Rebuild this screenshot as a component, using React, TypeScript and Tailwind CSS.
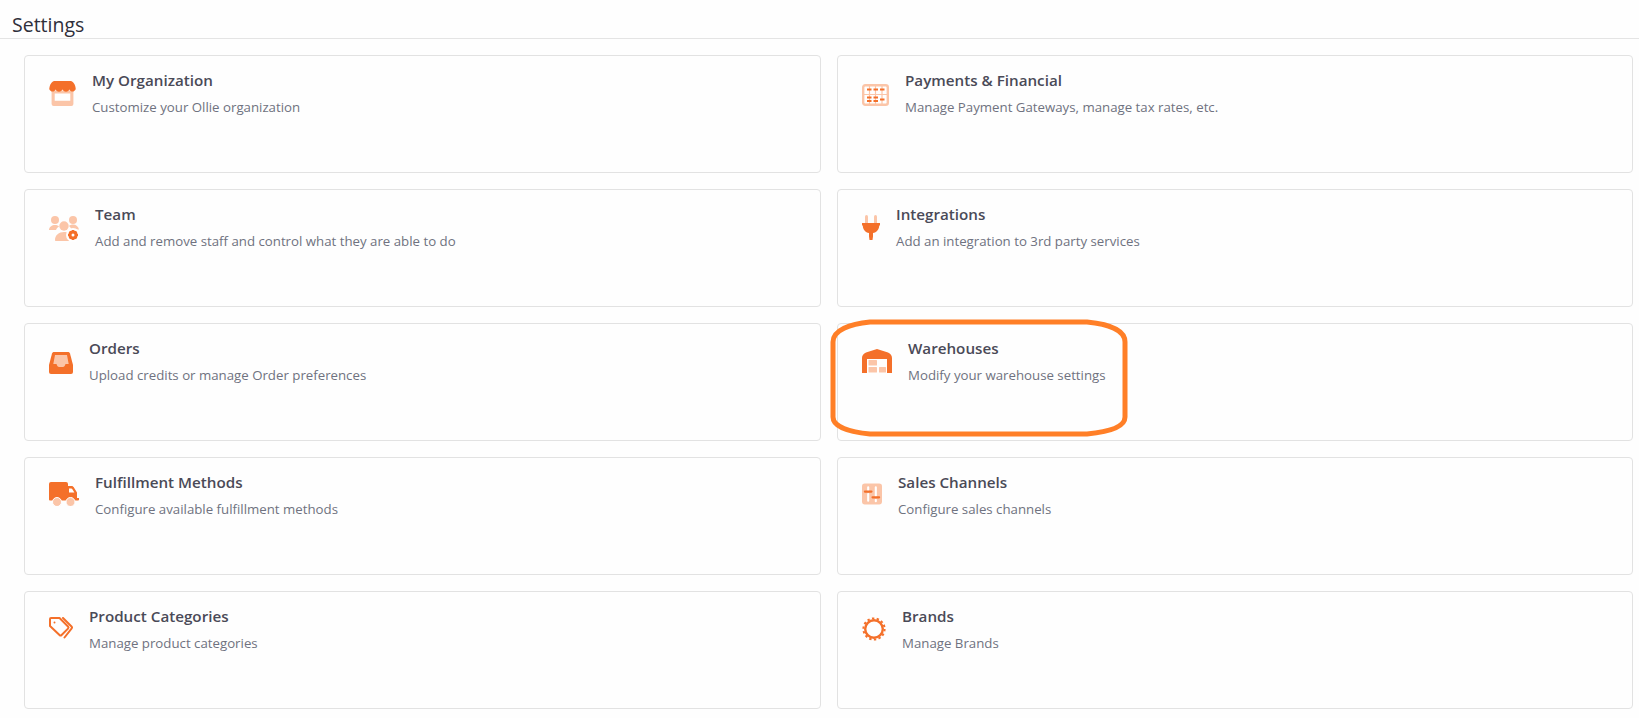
import React from "react";

const D = "#f4702a";
const L = "#fbc5a8";

const Org = () => (
  <svg width="27" height="25" viewBox="0 0 26 24" className="mt-[1px]">
    <path d="M2.500 9h21v13a2 2 0 0 1-2 2h-17a2 2 0 0 1-2-2z" fill={L} />
    <rect x="5.500" y="12" width="15" height="7" fill="#fff" />
    <path d="M5 0h16c2 0 4.600 3.500 4.700 7.800H.3C.4 3.500 3 0 5 0z" fill={D} />
    <path d="M.3 7.500c.6 3.500 5.300 3.500 6 .5.800 3 5.800 3 6.700 0 .9 3 5.900 3 6.700 0 .7 3 5.400 3 6-.5z" fill={D} />
  </svg>
);
const Payments = () => (
  <svg width="27" height="22" viewBox="0 0 27 22" className="mt-[4px]">
    <rect x="1.200" y="1.200" width="24.600" height="19.600" rx="2" fill="#fff" stroke={L} strokeWidth="2.400" />
    <path d="M2 10.500h23M7.500 2v18M13.500 2v18M20 2v18" stroke={L} strokeWidth="1.200" />
    <path d="M5 5.500h4.500M11.500 5.500h4.500M18 5.500h4.500M5 13.500h4.500M11.500 13.500h4.500M5 17h4.500M11.500 17h4.500M18 15.500h4.500" stroke={D} strokeWidth="2.200" />
  </svg>
);
const Team = () => (
  <svg width="30" height="27" viewBox="0 0 30 27" className="mt-[1px]">
    <circle cx="6" cy="5" r="4" fill={L} />
    <circle cx="24" cy="5" r="4" fill={L} />
    <path d="M0 15c0-3 3-5 6-5 2 0 3 .5 4 1.500-1.500 1-2.500 2-3 3.500z" fill={L} />
    <path d="M20 11c1-1 2.500-1.500 4-1.500 3 0 5.500 2 6 5h-7.500c-.5-1.500-1.500-2.500-2.500-3.500z" fill={L} />
    <circle cx="15" cy="11" r="4.700" fill={L} />
    <path d="M6 25c0-5 4-8 9-8 2 0 3.500.4 5 1.300V25c0 .7 0 .8.500 1H7c-.6 0-1-.4-1-1z" fill={L} />
    <circle cx="24" cy="20" r="7" fill="#fff" />
    <circle cx="24" cy="20" r="3" fill="none" stroke={D} strokeWidth="3" />
    <path d="M24 15v2M24 23v2M19 20h2M27 20h2M20.500 16.500l1.400 1.400M26.100 22.100l1.400 1.400M20.500 23.500l1.400-1.400M26.100 17.900l1.400-1.400" stroke={D} strokeWidth="2.400" />
  </svg>
);
const Plug = () => (
  <svg width="18" height="25" viewBox="0 0 18 25" className="mt-[1px]">
    <rect x="3" y="0" width="3" height="9" rx="1.500" fill={L} />
    <rect x="12" y="0" width="3" height="9" rx="1.500" fill={L} />
    <path d="M0 8h18v2.500h-.8c0 4-2.600 7-6.200 7.500v3.500l-.5 3.500h-3L7 21.500V18C3.400 17.500.8 14.500.8 10.500H0z" fill={D} />
  </svg>
);
const Orders = () => (
  <svg width="24" height="22" viewBox="0 0 24 22" className="mt-[4px]">
    <path d="M5 0h14c1 0 1.500.5 2 1.500L24 13v7a2 2 0 0 1-2 2H2a2 2 0 0 1-2-2v-7L3 1.500C3.500.5 4 0 5 0z" fill={D} />
    <path d="M6 3h12l1.700 9h-3.200c-.5 2-1.500 3-2.500 3h-4c-1 0-2-1-2.500-3H4.300z" fill={L} />
  </svg>
);
const Warehouse = () => (
  <svg width="30" height="24" viewBox="0 0 30 24" className="mt-[1px]">
    <path d="M15 0l11 3.500c2.500 1 4 3 4 5.500v15H0V9c0-2.500 1.500-4.500 4-5.500z" fill={D} />
    <rect x="5" y="10" width="20" height="14" fill="#fff" />
    <rect x="6.500" y="11" width="8.500" height="5.500" rx=".5" fill={L} />
    <rect x="6.500" y="18" width="8.500" height="5.500" rx=".5" fill={L} />
    <rect x="17" y="18" width="7" height="5.500" rx=".5" fill={L} />
  </svg>
);
const Truck = () => (
  <svg width="30" height="24" viewBox="0 0 30 24">
    <path d="M2 0h15a2 2 0 0 1 2 2v15H0V2a2 2 0 0 1 2-2z" fill={D} />
    <path d="M18 4h4.500c1 0 1.600.4 2.100 1.100L28 10.500V16h2v2H18z" fill={D} />
    <path d="M20 6.500h2.300c.4 0 .7.200.9.500l2.200 3.500H20z" fill="#fff" />
    <rect x="0" y="16" width="30" height="2.500" rx="1" fill={D} />
    <circle cx="8" cy="20" r="4.500" fill={L} stroke="#fff" strokeWidth="1" />
    <circle cx="21.500" cy="20" r="4.500" fill={L} stroke="#fff" strokeWidth="1" />
  </svg>
);
const Sales = () => (
  <svg width="20" height="22" viewBox="0 0 21 22" className="mt-[1px]">
    <rect width="21" height="22" rx="3" fill={L} />
    <path d="M6.500 4v3M6.500 11v7M14.500 4v9M14.500 17v1.500" stroke="#fff" strokeWidth="2.200" strokeLinecap="round" />
    <path d="M3 8.500h7M11 14.500h7" stroke={D} strokeWidth="2.200" strokeLinecap="round" />
  </svg>
);
const Tag = () => (
  <svg width="24" height="22" viewBox="0 0 24 22" fill="none" stroke={D} strokeWidth="2" className="mt-[1px]">
    <path d="M2 1h8.500L19 9.500a1.500 1.500 0 0 1 0 2.100L12.600 18a1.500 1.500 0 0 1-2.100 0L1 9V2a1 1 0 0 1 1-1z" strokeLinejoin="round" />
    <path d="M14 1l8.500 8.500a1.500 1.500 0 0 1 0 2.100L15.500 20.500" strokeLinecap="round" />
    <circle cx="5.500" cy="5.500" r="1" fill={D} stroke="none" />
  </svg>
);
const Brands = () => (
  <svg width="24" height="24" viewBox="0 0 24 24" fill="none" stroke={D} className="mt-[1px]">
    <circle cx="12" cy="12" r="8.800" strokeWidth="2.400" />
    <circle cx="12" cy="12" r="10.600" strokeWidth="2" strokeDasharray="2.400 2.357" />
  </svg>
);

const items: [React.ComponentType, string, string][] = [
  [Org, "My Organization", "Customize your Ollie organization"],
  [Payments, "Payments & Financial", "Manage Payment Gateways, manage tax rates, etc."],
  [Team, "Team", "Add and remove staff and control what they are able to do"],
  [Plug, "Integrations", "Add an integration to 3rd party services"],
  [Orders, "Orders", "Upload credits or manage Order preferences"],
  [Warehouse, "Warehouses", "Modify your warehouse settings"],
  [Truck, "Fulfillment Methods", "Configure available fulfillment methods"],
  [Sales, "Sales Channels", "Configure sales channels"],
  [Tag, "Product Categories", "Manage product categories"],
  [Brands, "Brands", "Manage Brands"],
];

export default function App() {
  return (
    <div className="relative h-[718px] w-[1639px] overflow-hidden bg-[#fefefe] font-['Open_Sans','Noto_Sans',sans-serif]">
      <div className="flex h-[39px] items-end border-b border-[#e4e4e4] pl-[12px] text-[19.5px] font-medium leading-[26px] text-[#2f2f3a]">
        Settings
      </div>
      <div className="ml-[24px] mt-[16px] grid w-[1609px] grid-cols-[797px_796px] gap-x-[16px] gap-y-[16px]">
        {items.map(([Icon, title, sub]) => (
          <div key={title} className="flex h-[118px] gap-[16px] rounded-[4px] border border-[#e2e2e2] px-[24px] pt-[13px]">
            <div className="pt-[11px]"><Icon /></div>
            <div>
              <div className="text-[15.2px] font-[550] leading-[22px] text-[#4a4a57]">{title}</div>
              <div className="mt-[5px] text-[13.25px] leading-[22px] text-[#6f7280]">{sub}</div>
            </div>
          </div>
        ))}
      </div>
      <svg className="absolute left-[828px] top-[317px]" width="302" height="122" viewBox="0 0 302 122" fill="none">
        <path d="M42 5L259 5C280 7 297 13 297 25L297 100C297 110 280 115 259 117L42 117C22 115 5 110 5 100L5 25C5 13 22 7 42 5z" stroke="#ff7f27" strokeWidth="5" />
      </svg>
    </div>
  );
}
